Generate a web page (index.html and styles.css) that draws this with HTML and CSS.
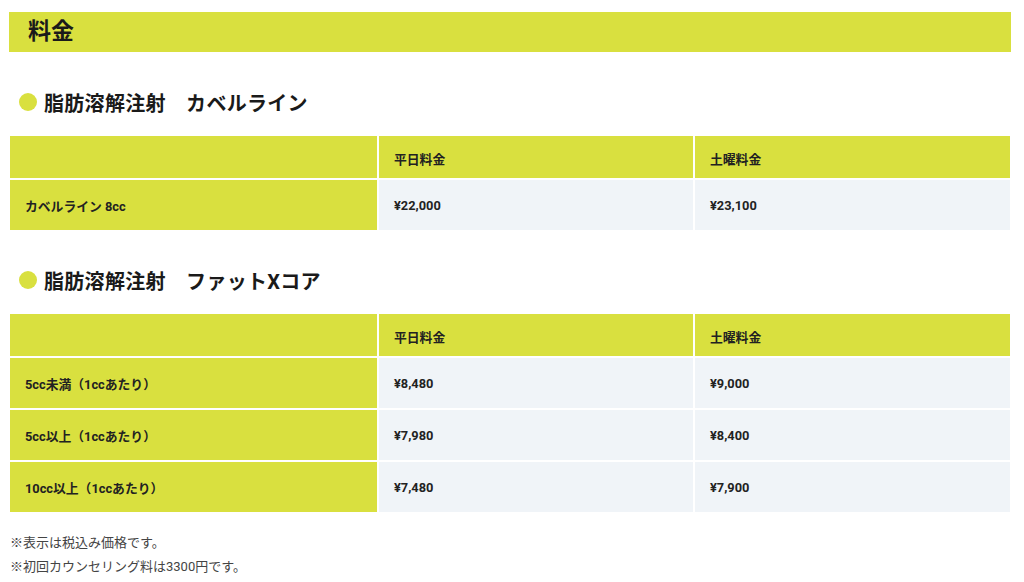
FILE: index.html
```html
<!DOCTYPE html>
<html lang="ja">
<head>
<meta charset="utf-8">
<title>料金</title>
<link rel="stylesheet" href="styles.css">
</head>
<body>
<div class="page">
  <h1 class="title-bar">料金</h1>

  <h2 class="section-heading"><span class="dot"></span>脂肪溶解注射　カベルライン</h2>
  <div class="price-table">
    <div class="cell head"></div>
    <div class="cell head">平日料金</div>
    <div class="cell head">土曜料金</div>
    <div class="cell label">カベルライン 8cc</div>
    <div class="cell value">¥22,000</div>
    <div class="cell value">¥23,100</div>
  </div>

  <h2 class="section-heading"><span class="dot"></span>脂肪溶解注射　ファットXコア</h2>
  <div class="price-table">
    <div class="cell head"></div>
    <div class="cell head">平日料金</div>
    <div class="cell head">土曜料金</div>
    <div class="cell label">5cc未満（1ccあたり）</div>
    <div class="cell value">¥8,480</div>
    <div class="cell value">¥9,000</div>
    <div class="cell label">5cc以上（1ccあたり）</div>
    <div class="cell value">¥7,980</div>
    <div class="cell value">¥8,400</div>
    <div class="cell label">10cc以上（1ccあたり）</div>
    <div class="cell value">¥7,480</div>
    <div class="cell value">¥7,900</div>
  </div>

  <p class="note first">※表示は税込み価格です。</p>
  <p class="note">※初回カウンセリング料は3300円です。</p>
</div>
</body>
</html>
```

FILE: styles.css
```css
* { box-sizing: border-box; }
html, body { margin: 0; padding: 0; background: #fff; }
body {
  font-family: Roboto, "Noto Sans CJK JP", sans-serif;
  color: #222;
}
.page {
  padding: 12px 14px 0 10px;
}
.title-bar {
  margin: 0 -1px 0 -1px;
  height: 40px;
  background: #d9e03f;
  font-size: 23px;
  font-weight: 700;
  line-height: 40px;
  padding-left: 19px;
  color: #1a1a1a;
}
.section-heading {
  display: flex;
  align-items: center;
  gap: 7px;
  margin: 35px 0 19px 0;
  height: 30px;
  font-size: 20px;
  letter-spacing: 0.3px;
  font-weight: 700;
  color: #1a1a1a;
  padding-left: 9px;
}
.dot {
  width: 18px;
  height: 18px;
  border-radius: 50%;
  background: #d9e03f;
  flex: none;
}
.price-table {
  display: grid;
  grid-template-columns: 367px 314px 1fr;
  grid-template-rows: 42px;
  grid-auto-rows: 50px;
  gap: 2px;
  width: 1000px;
}
.cell {
  display: flex;
  align-items: center;
  padding-left: 15px;
  font-size: 12.8px;
  font-weight: 700;
  color: #222;
}
.cell.head {
  background: #d9e03f;
  padding-top: 2px;
}
.cell.label { background: #d9e03f; }
.cell.value { background: #f0f4f8; }
.note {
  margin: 0;
  font-size: 13px;
  line-height: 24px;
  color: #444;
}
.note.first { margin-top: 19px; }
```
